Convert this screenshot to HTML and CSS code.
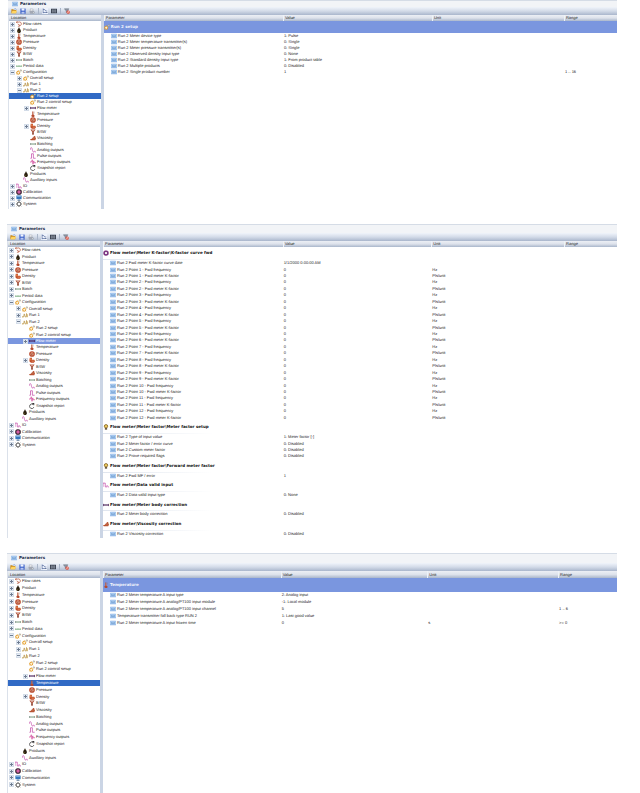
FILE: index.html
```
<!DOCTYPE html>
<html lang="en">
<head>
    <meta charset="UTF-8">
    <meta name="viewport" content="width=device-width, initial-scale=1.0">
    <title>Parameters</title>
    <link rel="stylesheet" href="styles.css">
</head>
<body>
    <svg class="sprite" aria-hidden="true">
        <symbol id="i-param" viewBox="0 0 16 16"><rect x="0" y="2" width="16" height="12" rx="1" fill="#8db4e6"/><rect x="1" y="4" width="14" height="8" fill="#bfdcf7"/><path d="M3 7h4M9 7h4M3 10h10" stroke="#3d74b8" stroke-width="1.5"/></symbol>
        <symbol id="i-open" viewBox="0 0 16 16"><path d="M1 3h5l2 2h6v9H1z" fill="#c98a1c"/><path d="M4 7h12l-3 7H1z" fill="#ffd560"/><path d="M9 3q3-3 5 1" fill="none" stroke="#3b6cb5" stroke-width="1.5"/></symbol>
        <symbol id="i-save" viewBox="0 0 16 16"><path d="M1 1h13l1 1v13H1z" fill="#3d62c9"/><rect x="4" y="1" width="8" height="6" fill="#f1f5ff"/><rect x="4" y="10" width="8" height="5" fill="#b9c8ef"/></symbol>
        <symbol id="i-print" viewBox="0 0 16 16"><path d="M4 2l7 1-1 5H3z" fill="#f4f4f6" stroke="#8c919d"/><path d="M1 8l11-1 3 4-4 4H3z" fill="#a3a8b4"/><circle cx="12" cy="12" r="2.500" fill="#d7dae0" stroke="#7f8592"/></symbol>
        <symbol id="i-tree" viewBox="0 0 16 16"><rect x="0" y="0" width="16" height="16" fill="#eef3fc"/><path d="M3 1v13M3 4h4l3 4h4M3 12h9" fill="none" stroke="#3f588e" stroke-width="1.600"/><circle cx="13" cy="12" r="1.500" fill="#263a6b"/></symbol>
        <symbol id="i-grid" viewBox="0 0 16 16"><rect x="0" y="2" width="16" height="12" fill="#39404f"/><path d="M2 6h12M2 10h12M5 3v10M11 3v10" stroke="#c7cedb" stroke-width="1"/></symbol>
        <symbol id="i-filter" viewBox="0 0 16 16"><path d="M1 2h12L9 8v6l-3-2V8z" fill="#8f97a6" stroke="#4d5564"/><circle cx="11" cy="11" r="3.500" fill="#fff" stroke="#d8321e" stroke-width="2"/><path d="M8 9l6 5" stroke="#d8321e" stroke-width="1.500"/></symbol>
        <symbol id="i-flow" viewBox="0 0 16 16"><path d="M1 3h5c6-2 9 2 8 6-1 3-4 5-7 5M4 1L1 3l3 3M5 9l5 2-4 4" fill="none" stroke="#b5563c" stroke-width="2"/></symbol>
        <symbol id="i-drop" viewBox="0 0 16 16"><path d="M8 0c1 5 5 6 5 11 0 3-2 5-5 5s-5-2-5-5c0-5 4-6 5-11z" fill="#2b2110"/><path d="M5 11q0 3 3 3" fill="none" stroke="#8d7a35" stroke-width="1.500"/></symbol>
        <symbol id="i-temp" viewBox="0 0 16 16"><path d="M6 1h3v8c5 2 4 7-1 7s-6-5-2-7z" fill="#b4492d"/><path d="M8 3v8" stroke="#f0b19c"/><path d="M10 3h3M10 6h2" stroke="#8f6a5c"/></symbol>
        <symbol id="i-press" viewBox="0 0 16 16"><circle cx="8" cy="8" r="7.500" fill="#b94a2c"/><circle cx="8" cy="8" r="4.500" fill="#e7a58c"/><path d="M4 6l4 3 4-4M6 11h4" fill="none" stroke="#7c2a16" stroke-width="1.500"/></symbol>
        <symbol id="i-dens" viewBox="0 0 16 16"><path d="M2 2h6v5h6l2 4-3 4H5l-4-4z" fill="#c14c25"/><circle cx="5" cy="6" r="3" fill="#dd7a48"/><path d="M7 11h6" stroke="#f2b896" stroke-width="1.500"/></symbol>
        <symbol id="i-bsw" viewBox="0 0 16 16"><path d="M1 1h14l-5 7v7H6V8z" fill="#b0533b"/><path d="M5 2h6L8 6z" fill="#e9d3cb"/><path d="M8 9v5" stroke="#3e2119" stroke-width="1.500"/></symbol>
        <symbol id="i-batch" viewBox="0 0 16 16"><path d="M1 6v4M15 6v4M2 8h12" stroke="#41614a" stroke-width="1.500"/><path d="M3 6l-2 2 2 2M13 6l2 2-2 2" fill="none" stroke="#41614a"/><circle cx="8" cy="8" r="1.600" fill="#7fb98b"/></symbol>
        <symbol id="i-period" viewBox="0 0 16 16"><path d="M0 9h16" stroke="#5b9b62" stroke-width="1.500"/><path d="M2 6v3M6 6v3M10 6v3M14 6v3" stroke="#5b9b62" stroke-width="1.500"/></symbol>
        <symbol id="i-gears" viewBox="0 0 16 16"><circle cx="6" cy="10" r="4" fill="#fff4d9" stroke="#e29a26" stroke-width="2.500"/><circle cx="13" cy="4" r="2" fill="#fff" stroke="#8e8a6c" stroke-width="1.500"/><path d="M6 3v2M0 8l2 1M0 14l2-1M11 14l-1-1" stroke="#e29a26" stroke-width="1.500"/></symbol>
        <symbol id="i-run" viewBox="0 0 16 16"><path d="M0 13h4l2-8 2 8h3l1-9 2 9" fill="none" stroke="#b28a39" stroke-width="1.700"/><path d="M1 11h3v3H1zM12 6h3v8h-3z" fill="#d0ad64"/></symbol>
        <symbol id="i-meter" viewBox="0 0 16 16"><path d="M1 5v6M15 5v6" stroke="#4a2058" stroke-width="2"/><path d="M1 8h14" stroke="#4a2058" stroke-width="3"/></symbol>
        <symbol id="i-visc" viewBox="0 0 16 16"><path d="M0 11l5-1 3-4h6l2 3-2 5H2z" fill="#b5502f"/><circle cx="12" cy="5" r="2.500" fill="#b5502f"/><path d="M7 10h6" stroke="#e2936f"/></symbol>
        <symbol id="i-analog" viewBox="0 0 16 16"><path d="M0 8C1 0 5 0 6 6s3 9 5 7l1-3" fill="none" stroke="#c650ab" stroke-width="2"/><path d="M13 13h3" stroke="#c650ab" stroke-width="2"/></symbol>
        <symbol id="i-pulse" viewBox="0 0 16 16"><path d="M1 14h3V2h5v12h6" fill="none" stroke="#c650ab" stroke-width="2"/></symbol>
        <symbol id="i-freq" viewBox="0 0 16 16"><path d="M0 8h4l2-6 2 12 2-9 1 5h5" fill="none" stroke="#d34f9e" stroke-width="2"/></symbol>
        <symbol id="i-snap" viewBox="0 0 16 16"><path d="M12 5a6 6 0 1 0 1 6" fill="none" stroke="#333" stroke-width="2"/><path d="M7 0h7v6z" fill="#333"/></symbol>
        <symbol id="i-io" viewBox="0 0 16 16"><path d="M0 13V3h6v10h5V8" fill="none" stroke="#c650ab" stroke-width="2"/><path d="M13 13h3" stroke="#c650ab" stroke-width="2"/></symbol>
        <symbol id="i-calib" viewBox="0 0 16 16"><circle cx="8" cy="8" r="6" fill="#d660a5" stroke="#3a2735" stroke-width="3"/><circle cx="8" cy="8" r="7.500" fill="none" stroke="#3a2735" stroke-dasharray="2 2"/></symbol>
        <symbol id="i-comm" viewBox="0 0 16 16"><rect x="1" y="1" width="14" height="10" rx="1" fill="#3778bd"/><path d="M3 4h10" stroke="#8fc0ee" stroke-width="2"/><path d="M8 11v3M4 15h8" stroke="#4a698c" stroke-width="2"/></symbol>
        <symbol id="i-system" viewBox="0 0 16 16"><circle cx="8" cy="8" r="5" fill="#fff" stroke="#444" stroke-width="2"/><path d="M8 0v3M8 13v3M0 8h3M13 8h3M2 2l2 2M12 12l2 2M2 14l2-2M12 4l2-2" stroke="#444" stroke-width="1.800"/></symbol>
        <symbol id="i-factor" viewBox="0 0 16 16"><circle cx="8" cy="6" r="4.500" fill="#f0cd60" stroke="#7a5a1a" stroke-width="2"/><path d="M5 11h6v4H5z" fill="#5b4a2c"/></symbol>
        <symbol id="i-kfactor" viewBox="0 0 16 16"><circle cx="8" cy="8" r="5" fill="#fff" stroke="#7b3480" stroke-width="4"/><circle cx="8" cy="8" r="7.500" fill="none" stroke="#7b3480" stroke-dasharray="2 2"/></symbol>
    </svg>

    <main class="page">
        <section class="panel panel-small" data-panel="setup"></section>
        <section class="panel panel-medium" data-panel="meter"></section>
        <section class="panel panel-large" data-panel="temperature"></section>
    </main>

    <script src="script.js"></script>
</body>
</html>
```
FILE: styles.css
```
body {
    margin: 0;
    background: #fff;
    color: #1c1c1c;
    font-family: "Liberation Sans", Arial, sans-serif;
    font-size: 4px;
    line-height: 6px;
    text-rendering: geometricPrecision;
}
.sprite {
    display: none;
}
.icon {
    display: block;
    flex: none;
    width: 6px;
    height: 6px;
}
.page {
    display: flex;
    flex-direction: column;
    gap: 15px;
    padding: 0 23px 0 7px;
}

/* panel sizes */
.panel-small {
    --title: 7px;
    --head: 6px;
    --body: 194px;
    --tree: 186px;
    --rows: 54px;
    --cols: 179fr 149fr 132fr 53fr;
    margin-left: 1px;
}
.panel-medium {
    --title: 9px;
    --head: 6px;
    --body: 297px;
    --tree: 201px;
    --rows: 290px;
    --cols: 180fr 149fr 133fr 53fr;
}
.panel-large {
    --title: 10px;
    --head: 7px;
    --body: 222px;
    --tree: 210px;
    --rows: 48px;
    --cols: 178fr 147fr 131fr 59fr;
}

.title-bar {
    display: flex;
    align-items: center;
    gap: 2px;
    height: var(--title);
    padding-left: 4px;
    background: #f2f4f7;
    box-shadow: inset 0 1px #d5dce6;
}
.title-bar h2 {
    margin: 0;
    font-family: "DejaVu Sans", Verdana, sans-serif;
    font-size: 4px;
    font-weight: bold;
    color: #1c2c4a;
}
.toolbar {
    display: flex;
    align-items: center;
    gap: 3px;
    height: 8px;
    padding-left: 3px;
    background: linear-gradient(#f0f4fa, #d3dbe8 50%, #a9b6cc);
}
.toolbar button {
    padding: 0;
    border: 0;
    background: none;
    cursor: pointer;
}
.separator {
    width: 1px;
    height: 6px;
    background: #a9b5c8;
}
.columns {
    display: grid;
    grid-template-columns: 93fr 3px 514fr;
}
.column-head {
    height: var(--head);
    line-height: var(--head);
    padding-left: 2px;
    background: linear-gradient(#eceff5, #dde2eb 50%, #a9b6cb);
    font-weight: normal;
    text-align: left;
}
.splitter {
    background: #cbd5e5;
}
.tree-pane {
    min-height: var(--body);
    border-left: 1px solid #dbe1ea;
    box-sizing: border-box;
    min-width: 0;
}
.tree {
    display: grid;
    grid-auto-rows: 1fr;
    min-height: var(--tree);
    margin: 0;
    padding: 0;
    list-style: none;
}
.tree li {
    display: flex;
    align-items: center;
    gap: 1px;
    padding-left: 1px;
    white-space: nowrap;
}
.tree .level-1 {
    padding-left: 8px;
}
.tree .level-2 {
    padding-left: 15px;
}
.tree .selected {
    background: #316ac5;
    color: #fff;
}
.panel-medium .tree .selected {
    background: #7a96df;
}
.expander {
    display: block;
    width: 5px;
    height: 5px;
    padding: 0;
    border: 1px solid #d3dce8;
    box-sizing: border-box;
    background: linear-gradient(#6f7d92, #6f7d92) center / 3px 1px no-repeat #e6edf6;
}
.expander.closed {
    background: linear-gradient(#6f7d92, #6f7d92) center / 3px 1px no-repeat,
        linear-gradient(#6f7d92, #6f7d92) center / 1px 3px no-repeat #e6edf6;
}
.spacer {
    width: 5px;
}

/* parameter table */
.params {
    display: block;
    min-width: 0;
}
.params thead {
    display: block;
}
.params tr {
    display: grid;
    grid-template-columns: var(--cols);
    align-items: center;
}
.params th,
.params td {
    min-width: 0;
    white-space: nowrap;
}
.params thead th {
    border-left: 1px solid #eef2f8;
    padding: 0 0 0 1px;
}
.params tbody {
    display: grid;
    grid-auto-rows: 1fr;
    min-height: var(--rows);
}
.params td {
    padding: 0 0 0 1px;
}
.params .name {
    display: flex;
    align-items: center;
    gap: 1px;
    padding-left: 7px;
}
.params .group {
    grid-row: span 2;
    grid-template-columns: 1fr;
    background: #7a96df;
    color: #f0f3fc;
}
.params .group th {
    display: flex;
    align-items: center;
    gap: 1px;
    padding: 0;
    font-family: "DejaVu Sans", Verdana, sans-serif;
    font-weight: bold;
}
.panel-medium .params .group {
    background: linear-gradient(90deg, #dfe5ee, #fff) 0 100% / 110px 1px no-repeat;
    color: #111;
}
```
FILE: script.js
```
// [level, icon, label, state] - state "+" closed, "-" open
const tree = [
    [0, "flow", "Flow rates", "+"],
    [0, "drop", "Product", "+"],
    [0, "temp", "Temperature", "+"],
    [0, "press", "Pressure", "+"],
    [0, "dens", "Density", "+"],
    [0, "bsw", "BSW", "+"],
    [0, "batch", "Batch", "+"],
    [0, "period", "Period data", "+"],
    [0, "gears", "Configuration", "-"],
    [1, "gears", "Overall setup", "+"],
    [1, "run", "Run 1", "+"],
    [1, "run", "Run 2", "-"],
    [2, "gears", "Run 2 setup"],
    [2, "gears", "Run 2 control setup"],
    [2, "meter", "Flow meter", "+"],
    [2, "temp", "Temperature"],
    [2, "press", "Pressure"],
    [2, "dens", "Density", "+"],
    [2, "bsw", "BSW"],
    [2, "visc", "Viscosity"],
    [2, "batch", "Batching"],
    [2, "analog", "Analog outputs"],
    [2, "pulse", "Pulse outputs"],
    [2, "freq", "Frequency outputs"],
    [2, "snap", "Snapshot report"],
    [1, "drop", "Products"],
    [1, "analog", "Auxiliary inputs"],
    [0, "io", "IO", "+"],
    [0, "calib", "Calibration", "+"],
    [0, "comm", "Communication", "+"],
    [0, "system", "System", "+"]
];

const points = [];
for (let i = 1; i <= 12; i++) {
    points.push([`Run 2 Point ${i} - Fwd frequency`, "0", "Hz"]);
    points.push([`Run 2 Point ${i} - Fwd meter K-factor`, "0", "Pls/unit"]);
}

const panels = {
    setup: {
        selected: 12,
        groups: [
            ["gears", "Run 2 setup", [
                ["Run 2 Meter device type", "1: Pulse"],
                ["Run 2 Meter temperature transmitter(s)", "0: Single"],
                ["Run 2 Meter pressure transmitter(s)", "0: Single"],
                ["Run 2 Observed density input type", "0: None"],
                ["Run 2 Standard density input type", "1: From product table"],
                ["Run 2 Multiple products", "0: Disabled"],
                ["Run 2 Single product number", "1", "", "1 .. 16"]
            ]]
        ]
    },
    meter: {
        selected: 14,
        groups: [
            ["kfactor", "Flow meter\\Meter K-factor\\K-factor curve fwd", [
                ["Run 2 Fwd meter K-factor curve date", "1/1/2000 0:00:00 AM"],
                ...points
            ]],
            ["factor", "Flow meter\\Meter factor\\Meter factor setup", [
                ["Run 2 Type of input value", "1: Meter factor [-]"],
                ["Run 2 Meter factor / error curve", "0: Disabled"],
                ["Run 2 Custom meter factor", "0: Disabled"],
                ["Run 2 Prove required flags", "0: Disabled"]
            ]],
            ["factor", "Flow meter\\Meter factor\\Forward meter factor", [
                ["Run 2 Fwd MF / error", "1"]
            ]],
            ["io", "Flow meter\\Data valid input", [
                ["Run 2 Data valid input type", "0: None"]
            ]],
            ["meter", "Flow meter\\Meter body correction", [
                ["Run 2 Meter body correction", "0: Disabled"]
            ]],
            ["visc", "Flow meter\\Viscosity correction", [
                ["Run 2 Viscosity correction", "0: Disabled"]
            ]]
        ]
    },
    temperature: {
        selected: 15,
        groups: [
            ["temp", "Temperature", [
                ["Run 2 Meter temperature A input type", "2: Analog input"],
                ["Run 2 Meter temperature A analog/PT100 input module", "-1: Local module"],
                ["Run 2 Meter temperature A analog/PT100 input channel", "5", "", "1 .. 6"],
                ["Temperature transmitter fall back type RUN 2", "1: Last good value"],
                ["Run 2 Meter temperature A input frozen time", "0", "s", ">= 0"]
            ]]
        ]
    }
};

function icon(name) {
    return `<svg class="icon" aria-hidden="true"><use href="#i-${name}"/></svg>`;
}

function toolButton(name, label) {
    return `<button type="button" aria-label="${label}">${icon(name)}</button>`;
}

function treeItem([level, iconName, label, state], selected) {
    let expander = `<span class="spacer"></span>`;
    if (state) {
        expander = `<button type="button" class="expander ${state === "+" ? "closed" : ""}" aria-label="Toggle ${label}"></button>`;
    }
    return `<li class="level-${level} ${selected ? "selected" : ""}">${expander}${icon(iconName)}<span>${label}</span></li>`;
}

function groupRows([iconName, title, rows]) {
    return `<tr class="group"><th colspan="4">${icon(iconName)}<span>${title}</span></th></tr>` +
        rows.map(([name, value, unit = "", range = ""]) => `
            <tr>
                <td class="name">${icon("param")}<span>${name}</span></td>
                <td>${value}</td>
                <td>${unit}</td>
                <td>${range}</td>
            </tr>`).join("");
}

document.querySelectorAll(".panel").forEach(panel => {
    const data = panels[panel.dataset.panel];
    panel.innerHTML = `
        <header class="title-bar">${icon("param")}<h2>Parameters</h2></header>
        <div class="toolbar">
            ${toolButton("open", "Open")}
            ${toolButton("save", "Save")}
            ${toolButton("print", "Print")}
            <span class="separator"></span>
            ${toolButton("tree", "Tree view")}
            ${toolButton("grid", "Grid view")}
            <span class="separator"></span>
            ${toolButton("filter", "Clear filter")}
        </div>
        <div class="columns">
            <nav class="tree-pane">
                <div class="column-head">Location</div>
                <ul class="tree">${tree.map((item, i) => treeItem(item, i === data.selected)).join("")}</ul>
            </nav>
            <div class="splitter"></div>
            <table class="params">
                <thead>
                    <tr>
                        <th class="column-head">Parameter</th>
                        <th class="column-head">Value</th>
                        <th class="column-head">Unit</th>
                        <th class="column-head">Range</th>
                    </tr>
                </thead>
                <tbody>${data.groups.map(groupRows).join("")}</tbody>
            </table>
        </div>`;
});
```
